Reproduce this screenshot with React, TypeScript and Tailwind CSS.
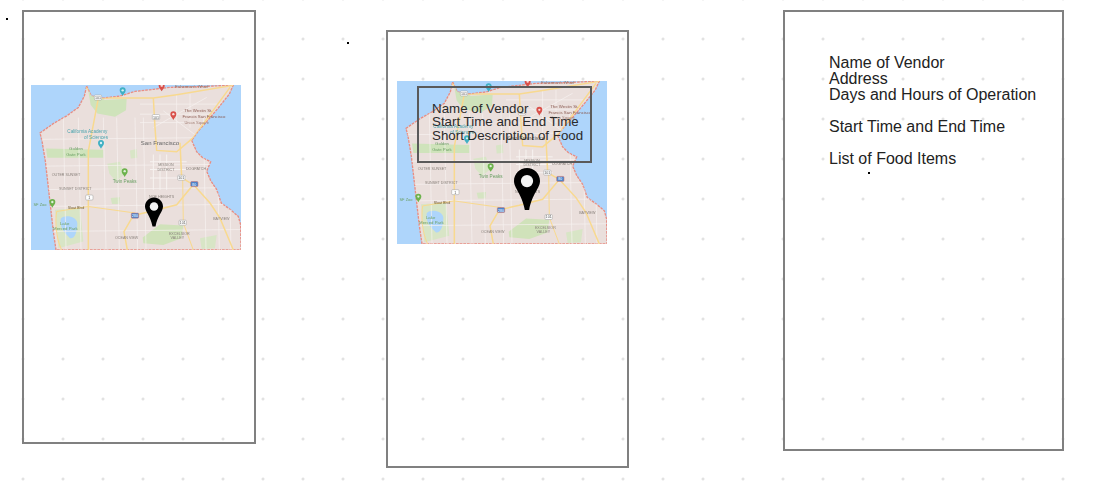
const LAND = "M200 36 L214 66 L250 72 L300 66 L345 52 L400 46 L450 40 L540 38 L640 33 L628 60 L596 100 L562 140 L535 170 L515 198 L530 232 L548 250 L572 262 L560 290 L572 318 L590 345 L604 385 L632 405 L655 425 L662 450 L663 525 L108 525 L100 470 L92 400 L84 330 L76 260 L66 200 L60 176 L100 148 L140 125 L175 100 L193 66 Z";

const STREETS_V = [130, 175, 250, 290, 345, 370, 550, 590, 625];
const STREETS_H = [195, 275, 345, 395, 470];

function Label({ x, y, c = "#8a827c", s = 14, children }: { x: number; y: number; c?: string; s?: number; children: string }) {
  return (
    <text x={x} y={y} fill={c} fontSize={s} fontFamily="'Liberation Sans', Arial, sans-serif" textAnchor="middle">
      {children}
    </text>
  );
}

function Poi({ x, y, c }: { x: number; y: number; c: string }) {
  return (
    <g>
      <path d={`M${x} ${y + 12} C${x - 4} ${y + 5} ${x - 9} ${y + 1} ${x - 9} ${y - 5} A9 9 0 1 1 ${x + 9} ${y - 5} C${x + 9} ${y + 1} ${x + 4} ${y + 5} ${x} ${y + 12} Z`} fill={c} />
      <circle cx={x} cy={y - 5} r="3.5" fill="#ffffff" opacity="0.8" />
    </g>
  );
}

function Shield({ x, y, t, blue }: { x: number; y: number; t: string; blue?: boolean }) {
  return (
    <g>
      <rect x={x - 11} y={y - 8} width="22" height="15" rx="3" fill={blue ? "#4a86cf" : "#ffffff"} stroke={blue ? "#d06a60" : "#9a9a9a"} strokeWidth="1.5" />
      <text x={x} y={y + 4} fontSize="11" fill={blue ? "#ffffff" : "#555555"} textAnchor="middle" fontFamily="'Liberation Sans', Arial, sans-serif">
        {t}
      </text>
    </g>
  );
}

function MapArt({ className, id }: { className: string; id: string }) {
  return (
    <svg viewBox="33 33 630 492" className={className} preserveAspectRatio="none" aria-label="Map of San Francisco">
      <defs>
        <clipPath id={id}>
          <path d={LAND} />
        </clipPath>
      </defs>
      <rect x="33" y="33" width="630" height="492" fill="#aed5fb" />
      <path d={LAND} fill="#eadfdc" stroke="#e98d82" strokeWidth="4" strokeDasharray="8 3" />
      <g clipPath={`url(#${id})`}>
        <path d="M205 52 L255 78 L320 74 L318 108 L285 128 L232 118 L212 92 Z" fill="#cfe3bb" />
        <path d="M78 222 L250 226 L250 250 L82 250 Z" fill="#cfe3bb" />
        <path d="M262 268 L300 262 L312 300 L288 320 L268 298 Z" fill="#d8e5c6" />
        <path d="M330 228 L350 224 L352 250 L332 252 Z" fill="#d8e5c6" />
        <path d="M272 370 L300 368 L298 388 L276 388 Z" fill="#d5e4c2" />
        <path d="M368 488 L420 448 L490 452 L484 490 L430 510 L370 505 Z" fill="#d0e2ba" />
        <path d="M105 405 L180 400 L190 500 L115 520 Z" fill="#d8e5c6" />
        <path d="M122 432 C135 418 170 425 172 445 C172 470 165 492 150 490 C135 475 118 460 122 432 Z" fill="#aed5fb" />
        <path d="M540 490 L590 480 L585 520 L545 522 Z" fill="#d8e5c6" />
        <g stroke="#f7f3f1" strokeWidth="2" fill="none">
          {STREETS_V.map((x) => (
            <path key={x} d={`M${x} 130 L${x + 8} 525`} />
          ))}
          {STREETS_H.map((y) => (
            <path key={y} d={`M60 ${y} L660 ${y - 6}`} />
          ))}
          <path d="M400 160 L560 70 M430 110 L530 185 M470 60 L470 200 M510 60 L510 160 M360 90 L600 90 M360 120 L570 120 M360 145 L545 145" />
          <path d="M400 240 L400 345 M420 240 L420 345 M440 240 L440 345 M390 262 L500 262 M390 285 L500 285 M390 310 L500 310" strokeWidth="3" />
        </g>
        <g stroke="#f8d98f" strokeWidth="4.5" fill="none">
          <path d="M198 40 L235 72 L400 72 L470 62 L640 34" />
          <path d="M235 72 L205 230 L205 525" />
          <path d="M400 72 L405 160 L410 228 L470 232 L520 190 L630 40" />
          <path d="M480 205 L485 310 L520 330 L470 390 L400 408 L340 422 L312 470 L322 525" />
          <path d="M520 330 L570 385 L600 430 L640 525" />
          <path d="M110 410 L205 395 L345 415" strokeWidth="3" />
          <path d="M110 410 C105 440 108 490 125 525" strokeWidth="3" />
          <path d="M488 310 L490 445 L520 525" strokeWidth="3" />
        </g>
      </g>
      <Shield x={234} y={71} t="101" />
      <Shield x={408} y={129} t="101" />
      <Shield x={208} y={369} t="1" />
      <Shield x={484} y={310} t="101" />
      <Shield x={488} y={444} t="101" />
      <Shield x={345} y={423} t="280" blue />
      <Shield x={523} y={329} t="80" blue />
      <Poi x={425} y={40} c="#d9504a" />
      <Poi x={460} y={125} c="#d9504a" />
      <Poi x={308} y={54} c="#3fb0c4" />
      <Poi x={243} y={211} c="#3fb0c4" />
      <Poi x={314} y={295} c="#6cb24c" />
      <Poi x={97} y={387} c="#6cb24c" />
      <Label x={515} y={41} c="#8a6a5e" s={12}>Fisherman's Wharf</Label>
      <Label x={535} y={115} c="#8a5a50" s={13}>The Westin St.</Label>
      <Label x={552} y={132} c="#8a5a50" s={13}>Francis San Francisco</Label>
      <Label x={530} y={148} c="#a07a70" s={12}>Union Square</Label>
      <Label x={202} y={176} c="#4aa3ae" s={14}>California Academy</Label>
      <Label x={228} y={193} c="#4aa3ae" s={14}>of Sciences</Label>
      <Label x={168} y={227} c="#6a9f63" s={13}>Golden</Label>
      <Label x={168} y={244} c="#6a9f63" s={13}>Gate Park</Label>
      <Label x={420} y={212} c="#666666" s={18}>San Francisco</Label>
      <Label x={438} y={276} s={11}>MISSION</Label>
      <Label x={438} y={289} s={11}>DISTRICT</Label>
      <Label x={528} y={286} s={11}>DOGPATCH</Label>
      <Label x={138} y={303} s={11}>OUTER SUNSET</Label>
      <Label x={166} y={345} s={11}>SUNSET DISTRICT</Label>
      <Label x={314} y={326} c="#6a9f63" s={14}>Twin Peaks</Label>
      <Label x={425} y={370} s={11}>NOE HEIGHTS</Label>
      <Label x={60} y={394} c="#6a9f63" s={12}>SF Zoo</Label>
      <Label x={168} y={404} c="#6f5a2d" s={11}>Sloat Blvd</Label>
      <Label x={134} y={450} c="#6a9f63" s={13}>Lake</Label>
      <Label x={136} y={466} c="#6a9f63" s={13}>Merced Park</Label>
      <Label x={320} y={493} s={11}>OCEAN VIEW</Label>
      <Label x={478} y={480} s={11}>EXCELSIOR</Label>
      <Label x={472} y={493} s={11}>VALLEY</Label>
      <Label x={604} y={435} s={11}>BAYVIEW</Label>
    </svg>
  );
}

function Pin({ className }: { className: string }) {
  return (
    <svg viewBox="0 0 36 58" className={className} aria-hidden="true">
      <path
        fill="#000000"
        d="M18 0 C28 0 36 8 36 18 C36 28 25 36 21 58 L15 58 C11 36 0 28 0 18 C0 8 8 0 18 0 Z"
      />
      <circle cx="18" cy="18" r="8.5" fill="#f4f4f4" />
    </svg>
  );
}

export default function App() {
  return (
    <div className="relative flex h-[488px] w-[1098px] items-start overflow-hidden bg-white bg-[radial-gradient(circle_at_center,#e2e2e2_1.2px,transparent_1.8px)] bg-[length:40px_40px] bg-[position:3px_19px] font-['Liberation_Sans',Arial,sans-serif] text-[#222222]">
      <div className="ml-[22px] mt-[10px] h-[434px] w-[234px] shrink-0 border-2 border-[#808080] pl-[7px] pt-[73px]">
        <div className="relative h-[165px] w-[210px]">
          <MapArt id="map-a" className="block h-[165px] w-[210px] blur-[0.3px]" />
          <Pin className="absolute left-[114px] top-[112px] h-[30px] w-[18px]" />
        </div>
      </div>

      <div className="ml-[130px] mt-[30px] h-[438px] w-[243px] shrink-0 border-2 border-[#808080] pl-[9px] pt-[49px]">
        <div className="relative h-[163px] w-[210px]">
          <MapArt id="map-b" className="block h-[163px] w-[210px] blur-[0.3px]" />
          <div className="absolute left-[20px] top-[5px] h-[77px] w-[175px] border-2 border-[#5a5a5a] pl-[13px] pt-[14px] text-[13.33px] leading-[13.33px] text-[#2a2a2a]">
            <p>Name of Vendor</p>
            <p className="whitespace-nowrap">Start Time and End Time</p>
            <p className="whitespace-nowrap">Short Description of Food</p>
          </div>
          <Pin className="absolute left-[117px] top-[87px] h-[42px] w-[26px]" />
        </div>
      </div>

      <div className="ml-[154px] mt-[10px] h-[441px] w-[281px] shrink-0 border-2 border-[#808080] pl-[44px] pt-[43px] text-[16px] leading-[16px]">
        <p>Name of Vendor</p>
        <p>Address</p>
        <p>Days and Hours of Operation</p>
        <p className="mt-4">Start Time and End Time</p>
        <p className="mt-4">List of Food Items</p>
      </div>

      <span className="absolute left-[6px] top-[18px] h-[2px] w-[2px] bg-black" />
      <span className="absolute left-[347px] top-[42px] h-[2px] w-[2px] bg-black" />
      <span className="absolute left-[868px] top-[172px] h-[2px] w-[2px] bg-black" />
    </div>
  );
}
